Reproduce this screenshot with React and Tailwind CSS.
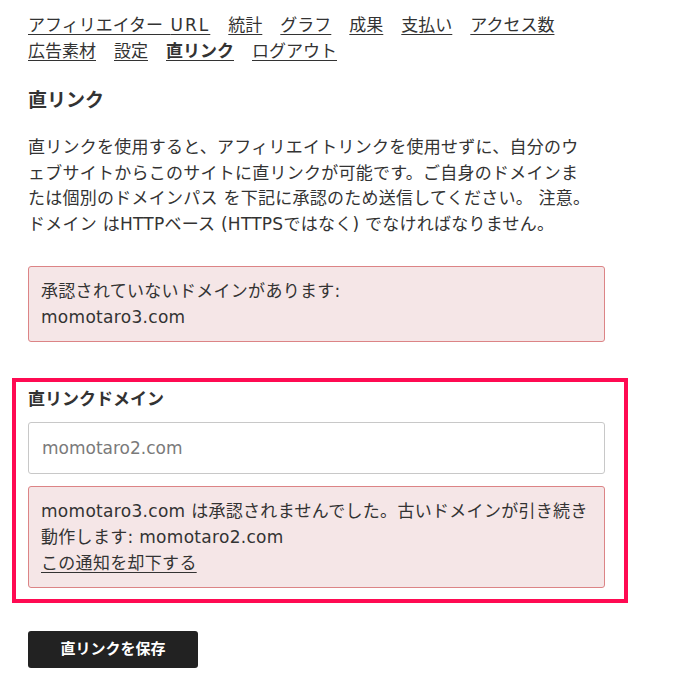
const navLinks = [
  { label: 'アフィリエイター', suffix: 'URL' },
  { label: '統計' },
  { label: 'グラフ' },
  { label: '成果' },
  { label: '支払い' },
  { label: 'アクセス数' },
  { label: '広告素材' },
  { label: '設定' },
  { label: '直リンク', active: true },
  { label: 'ログアウト' },
]

const intro = [
  '直リンクを使用すると、アフィリエイトリンクを使用せずに、自分のウ',
  'ェブサイトからこのサイトに直リンクが可能です。ご自身のドメインま',
  'たは個別のドメインパス を下記に承認のため送信してください。 注意。',
  'ドメイン はHTTPベース (HTTPSではなく) でなければなりません。',
]

const font = { fontFamily: '"DejaVu Sans", "Noto Sans CJK JP", sans-serif' }

function Alert({ children }) {
  return (
    <div className="whitespace-nowrap rounded-[3px] border border-[#dc8486] bg-[#f5e6e7] px-3 py-[11px] text-[17px] leading-[26px] tracking-[0.3px] text-[#333]">
      {children}
    </div>
  )
}

export default function App() {
  return (
    <div className="min-h-[688px] bg-white pt-3 text-[#333]" style={font}>
      <div className="ml-[28px] w-[577px]">
        <nav className="flex flex-wrap gap-x-[18px] text-[17px] leading-[26px]">
          {navLinks.map((link) => (
            <a
              key={link.label}
              href="#"
              className={`underline underline-offset-[3px] decoration-1 text-[#333] ${link.active ? 'font-bold' : ''}`}
            >
              {link.label}
              {link.suffix && <span className="tracking-[0.12em]"> {link.suffix}</span>}
            </a>
          ))}
        </nav>

        <h2 className="mt-[22px] text-[19px] font-bold leading-[28px]">直リンク</h2>

        {/* 改行位置は元画面に合わせて固定 */}
        <p className="mt-[21px] whitespace-nowrap text-[17px] leading-[25.5px] tracking-[0.25px]">
          {intro.map((line) => (
            <span key={line} className="block">
              {line}
            </span>
          ))}
        </p>

        <div className="mt-[29px]">
          <Alert>
            承認されていないドメインがあります:
            <br />
            momotaro3.com
          </Alert>
        </div>

        <div className="-ml-4 -mr-[23px] mt-[36px] border-4 border-[#ff0a52] pb-[11px] pl-3 pr-[19px] pt-1">
          <label className="block text-[17px] font-bold leading-[26px]">直リンクドメイン</label>
          <input
            type="text"
            placeholder="momotaro2.com"
            className="mt-[10px] block h-[52px] w-full rounded-[3px] border border-[#c8c8c8] bg-white px-[13px] text-[17px] outline-none placeholder:text-[#7a7a7a]"
            style={font}
          />
          <div className="mt-3">
            <Alert>
              momotaro3.com は承認されませんでした。古いドメインが引き続き
              <br />
              動作します: momotaro2.com
              <br />
              <a href="#" className="underline underline-offset-[3px] decoration-1">
                この通知を却下する
              </a>
            </Alert>
          </div>
        </div>

        <button className="mt-[28px] h-[37px] w-[170px] rounded-[3px] bg-[#222] text-[15px] font-bold text-white">
          直リンクを保存
        </button>
      </div>
    </div>
  )
}
